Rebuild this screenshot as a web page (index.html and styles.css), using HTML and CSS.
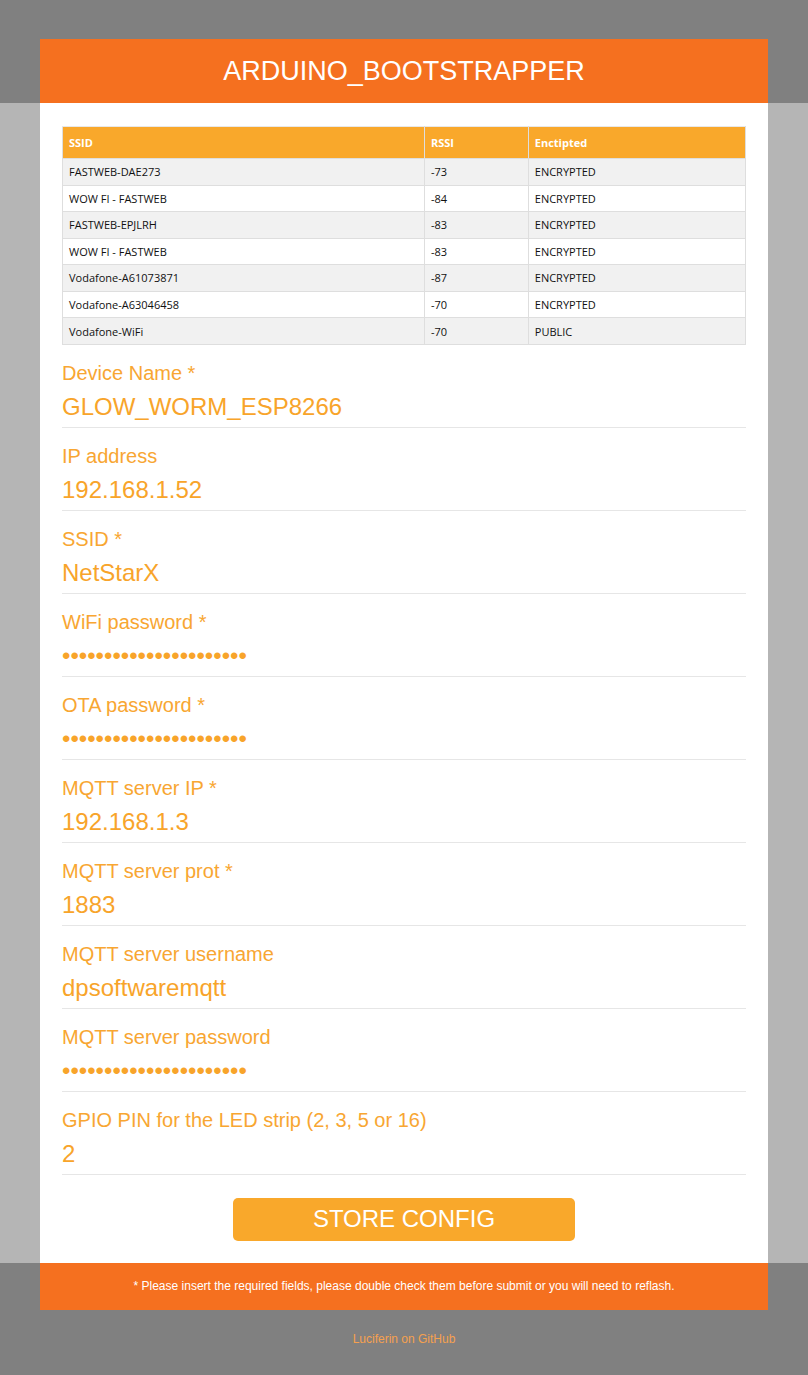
FILE: index.html
```html
<!DOCTYPE html>
<html lang="en">
<head>
<meta charset="utf-8">
<title>ARDUINO_BOOTSTRAPPER</title>
<link rel="stylesheet" href="styles.css">
</head>
<body>
<div class="band band-top">
  <header class="masthead"><h1 class="title">ARDUINO_BOOTSTRAPPER</h1></header>
</div>
<div class="band band-mid">
  <main class="panel">
    <table class="wifi-table">
      <thead>
        <tr><th class="col-ssid">SSID</th><th class="col-rssi">RSSI</th><th class="col-enc">Enctipted</th></tr>
      </thead>
      <tbody>
        <tr><td>FASTWEB-DAE273</td><td>-73</td><td>ENCRYPTED</td></tr>
        <tr><td>WOW FI - FASTWEB</td><td>-84</td><td>ENCRYPTED</td></tr>
        <tr><td>FASTWEB-EPJLRH</td><td>-83</td><td>ENCRYPTED</td></tr>
        <tr><td>WOW FI - FASTWEB</td><td>-83</td><td>ENCRYPTED</td></tr>
        <tr><td>Vodafone-A61073871</td><td>-87</td><td>ENCRYPTED</td></tr>
        <tr><td>Vodafone-A63046458</td><td>-70</td><td>ENCRYPTED</td></tr>
        <tr><td>Vodafone-WiFi</td><td>-70</td><td>PUBLIC</td></tr>
      </tbody>
    </table>
    <form class="config-form">
      <div class="field"><label class="field-label">Device Name *</label><input class="field-input" type="text" value="GLOW_WORM_ESP8266"></div>
      <div class="field"><label class="field-label">IP address</label><input class="field-input" type="text" value="192.168.1.52"></div>
      <div class="field"><label class="field-label">SSID *</label><input class="field-input" type="text" value="NetStarX"></div>
      <div class="field"><label class="field-label">WiFi password *</label><input class="field-input" type="password" value="xxxxxxxxxxxxxxxxxxxxxx"></div>
      <div class="field"><label class="field-label">OTA password *</label><input class="field-input" type="password" value="xxxxxxxxxxxxxxxxxxxxxx"></div>
      <div class="field"><label class="field-label">MQTT server IP *</label><input class="field-input" type="text" value="192.168.1.3"></div>
      <div class="field"><label class="field-label">MQTT server prot *</label><input class="field-input" type="text" value="1883"></div>
      <div class="field"><label class="field-label">MQTT server username</label><input class="field-input" type="text" value="dpsoftwaremqtt"></div>
      <div class="field"><label class="field-label">MQTT server password</label><input class="field-input" type="password" value="xxxxxxxxxxxxxxxxxxxxxx"></div>
      <div class="field"><label class="field-label">GPIO PIN for the LED strip (2, 3, 5 or 16)</label><input class="field-input" type="text" value="2"></div>
      <div class="actions"><button class="submit-btn" type="button">STORE CONFIG</button></div>
    </form>
  </main>
</div>
<div class="band band-bottom">
  <footer class="notice">* Please insert the required fields, please double check them before submit or you will need to reflash.</footer>
  <a class="gh-link" href="#">Luciferin on GitHub</a>
</div>
</body>
</html>
```
FILE: styles.css
```css
html, body {
  margin: 0;
  padding: 0;
}
body {
  background: #808080;
  font-family: "Liberation Sans", Arial, sans-serif;
}
.band {
  width: 100%;
}
.band-top {
  padding-top: 39px;
}
.masthead {
  width: 728px;
  height: 64px;
  margin: 0 auto;
  background: #f5701f;
  display: flex;
  align-items: center;
  justify-content: center;
}
.title {
  margin: 0;
  font-size: 27px;
  font-weight: normal;
  color: #ffffff;
  line-height: 1;
}
.band-mid {
  background: #b5b5b5;
}
.panel {
  display: block;
  width: 728px;
  box-sizing: border-box;
  margin: 0 auto;
  background: #ffffff;
  padding: 23px 22px 22px;
}
.wifi-table {
  width: 100%;
  border-collapse: collapse;
  font-family: "Open Sans", "DejaVu Sans", sans-serif;
  font-size: 11px;
  color: #111111;
  border: 1px solid #dedede;
}
.wifi-table th,
.wifi-table td {
  text-align: left;
  padding: 0 6px;
  border: 1px solid #dedede;
  box-sizing: border-box;
}
.wifi-table th {
  background: #f9a82b;
  color: #ffffff;
  font-weight: bold;
  height: 32px;
  border-top-color: #e8e8e8;
}
.wifi-table td {
  height: 26.55px;
  background: #ffffff;
}
.wifi-table tbody tr:nth-child(odd) td {
  background: #f1f1f1;
}
.col-ssid { width: 53%; }
.col-rssi { width: 15.2%; }
.col-enc { width: 31.8%; }
.config-form {
  margin: 0;
}
.field {
  padding: 17px 0 6px;
  border-bottom: 1px solid #e6e6e6;
}
.field-label {
  display: block;
  font-size: 20px;
  line-height: 23px;
  color: #f8a632;
  margin-bottom: 8px;
}
.field-input {
  display: block;
  width: 100%;
  height: 28px;
  margin: 0;
  padding: 0;
  border: 0;
  outline: none;
  background: transparent;
  font-family: "Liberation Sans", Arial, sans-serif;
  font-size: 24px;
  color: #f8a42a;
}
.actions {
  display: flex;
  justify-content: center;
  padding-top: 23px;
}
.submit-btn {
  width: 50%;
  height: 43px;
  border: 0;
  border-radius: 5px;
  background: #f9a82b;
  color: #ffffff;
  font-family: "Liberation Sans", Arial, sans-serif;
  font-size: 24px;
  padding: 0;
  cursor: pointer;
}
.band-bottom {
  display: flex;
  flex-direction: column;
  align-items: center;
  height: 112px;
}
.notice {
  width: 728px;
  height: 47px;
  background: #f5701f;
  color: #ffffff;
  font-size: 12px;
  display: flex;
  align-items: center;
  justify-content: center;
}
.gh-link {
  margin-top: 22px;
  font-size: 12px;
  line-height: 14px;
  color: #f5a04f;
  text-decoration: none;
}
```
